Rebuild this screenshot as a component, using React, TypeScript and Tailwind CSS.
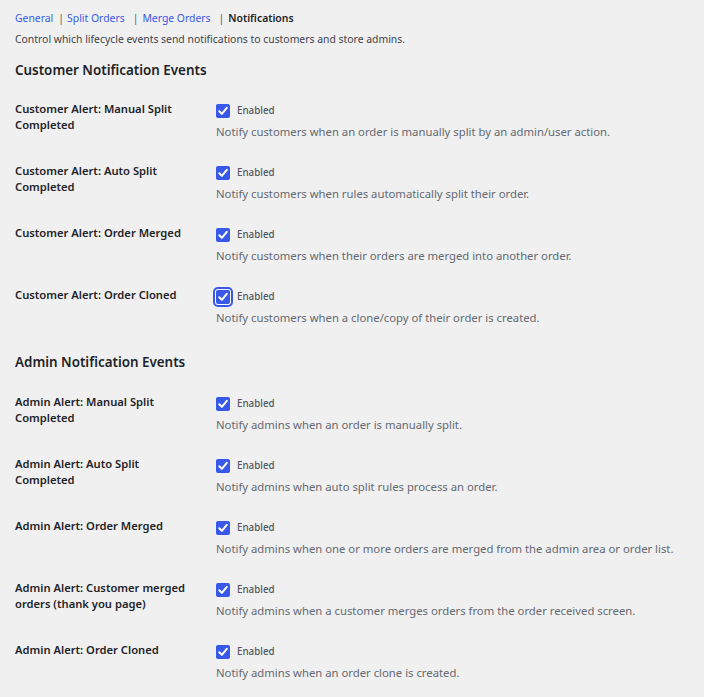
import React from 'react';

type Row = { label: string; desc: string; focused?: boolean };

const customerRows: Row[] = [
  { label: 'Customer Alert: Manual Split Completed', desc: 'Notify customers when an order is manually split by an admin/user action.' },
  { label: 'Customer Alert: Auto Split Completed', desc: 'Notify customers when rules automatically split their order.' },
  { label: 'Customer Alert: Order Merged', desc: 'Notify customers when their orders are merged into another order.' },
  { label: 'Customer Alert: Order Cloned', desc: 'Notify customers when a clone/copy of their order is created.', focused: true },
];

const adminRows: Row[] = [
  { label: 'Admin Alert: Manual Split Completed', desc: 'Notify admins when an order is manually split.' },
  { label: 'Admin Alert: Auto Split Completed', desc: 'Notify admins when auto split rules process an order.' },
  { label: 'Admin Alert: Order Merged', desc: 'Notify admins when one or more orders are merged from the admin area or order list.' },
  { label: 'Admin Alert: Customer merged orders (thank you page)', desc: 'Notify admins when a customer merges orders from the order received screen.' },
  { label: 'Admin Alert: Order Cloned', desc: 'Notify admins when an order clone is created.' },
];

function Checkbox({ focused }: { focused?: boolean }) {
  return (
    <span
      className={
        focused
          ? 'flex h-[14px] w-[14px] items-center justify-center rounded-[2px] bg-[#3858e9] ring-1 ring-white outline-2 outline-offset-1 outline-[#3858e9]'
          : 'flex h-[14px] w-[14px] items-center justify-center rounded-[2px] bg-[#3858e9]'
      }
    >
      <svg viewBox="0 0 14 14" className="h-[14px] w-[14px]" fill="none">
        <path d="M3.3 7.2 L5.9 9.9 L10.8 3.8" stroke="white" strokeWidth="2" strokeLinecap="round" strokeLinejoin="round" />
      </svg>
    </span>
  );
}

function SettingRow({ row }: { row: Row }) {
  return (
    <div className="flex pb-[23px]">
      <div className="w-[201px] shrink-0 pr-[24px] text-[11.2px] font-semibold leading-[16px] text-[#1d2327]">
        {row.label}
      </div>
      <div className="pt-[1px]">
        <label className="flex h-[18px] items-center gap-[7px]">
          <Checkbox focused={row.focused} />
          <span className="text-[9.8px] font-medium text-[#50575e]">Enabled</span>
        </label>
        <p className="mt-[4px] text-[11.3px] leading-[16px] text-[#646970]">{row.desc}</p>
      </div>
    </div>
  );
}

export default function App() {
  return (
    <div className="min-h-[697px] bg-[#f0f0f1] px-[15px] pt-[10px] font-['Noto_Sans',sans-serif]">
      <div className="flex h-[17px] items-center text-[10.4px] leading-[17px]">
        <a className="text-[#3858e9]">General</a>
        <span className="ml-[5px] mr-[3px] text-[#50575e]">|</span>
        <a className="text-[#3858e9]">Split Orders</a>
        <span className="ml-[8px] mr-[4px] text-[#50575e]">|</span>
        <a className="text-[#3858e9]">Merge Orders</a>
        <span className="ml-[8px] mr-[4px] text-[#50575e]">|</span>
        <span className="font-semibold text-[#1d2327]">Notifications</span>
      </div>
      <p className="mt-[4px] text-[10.4px] leading-[16px] text-[#3c434a]">
        Control which lifecycle events send notifications to customers and store admins.
      </p>

      <h2 className="mt-[13px] mb-[21px] text-[13.4px] font-semibold leading-[20px] text-[#1d2327]">
        Customer Notification Events
      </h2>
      {customerRows.map((r) => (
        <SettingRow key={r.label} row={r} />
      ))}

      <h2 className="mt-[3px] mb-[22px] text-[13.4px] font-semibold leading-[20px] text-[#1d2327]">
        Admin Notification Events
      </h2>
      {adminRows.map((r) => (
        <SettingRow key={r.label} row={r} />
      ))}
    </div>
  );
}
